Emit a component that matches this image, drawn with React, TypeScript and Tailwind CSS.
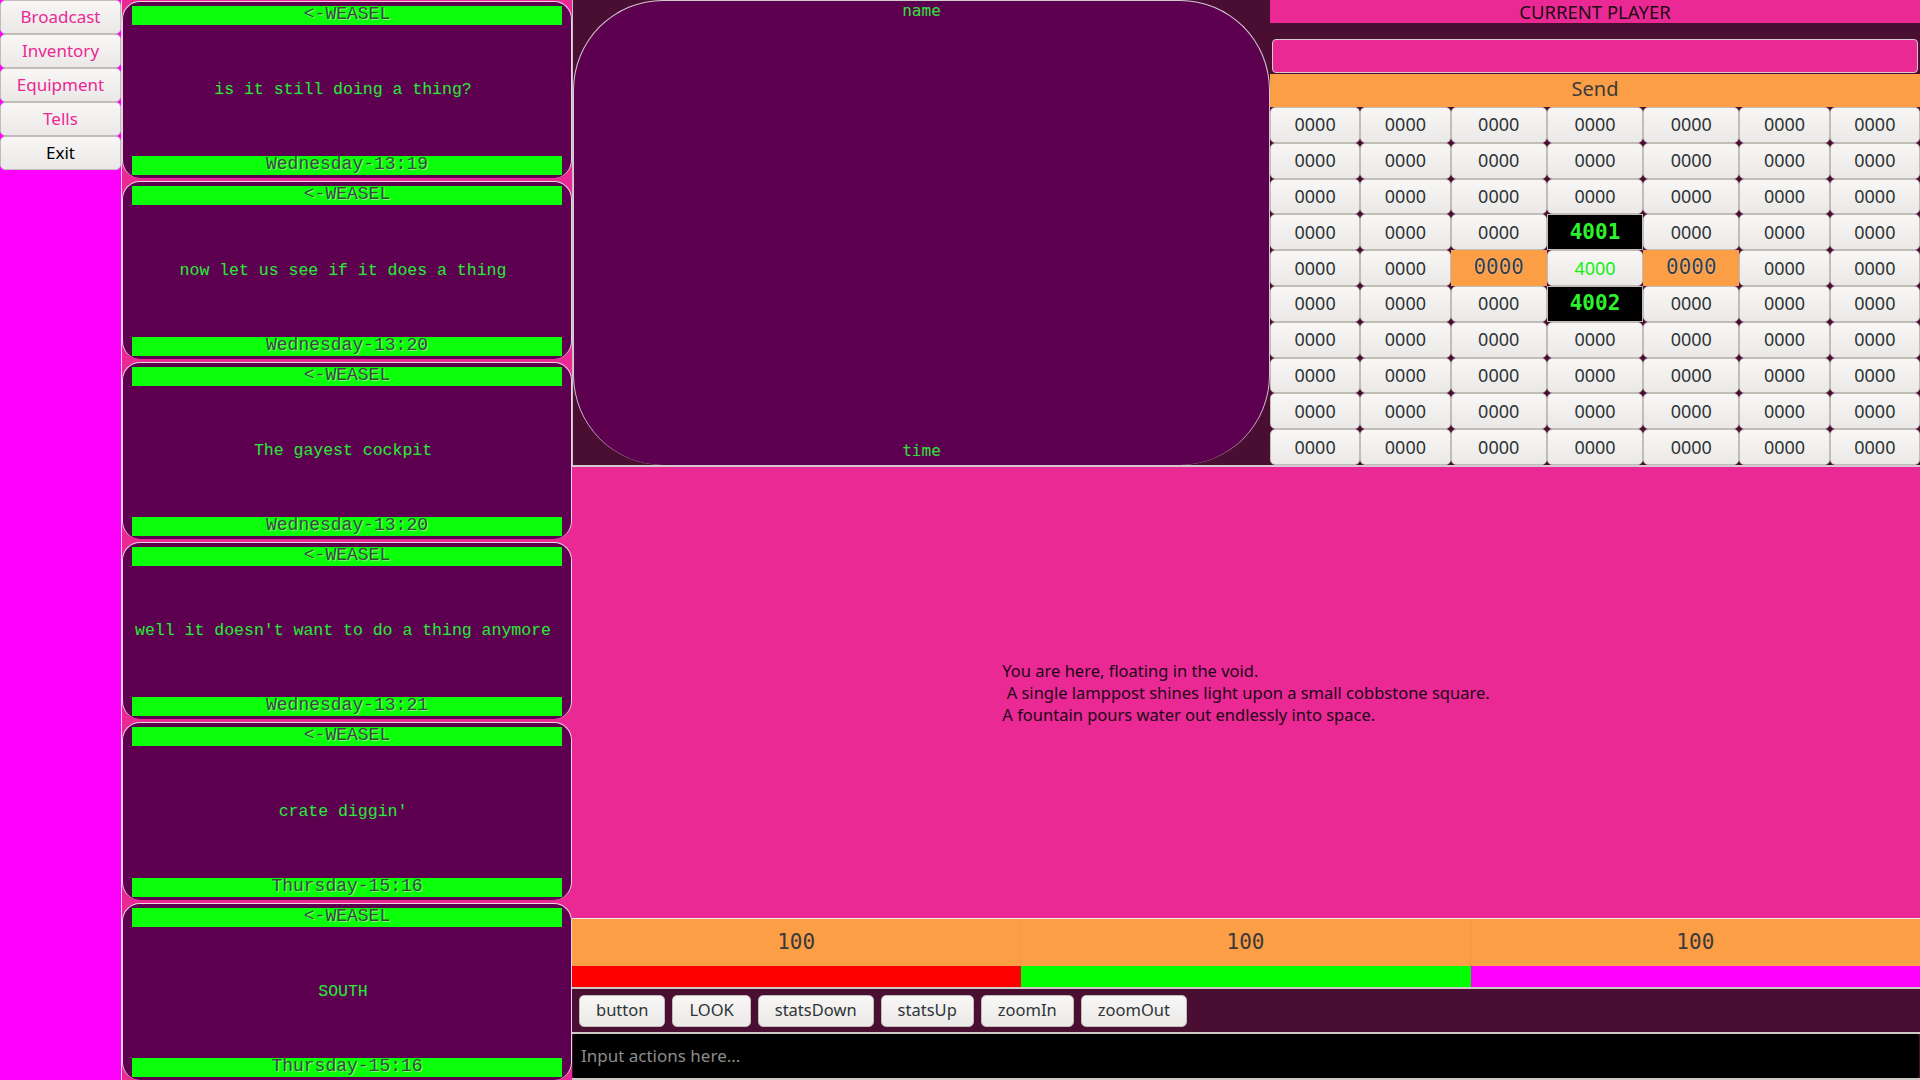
import React from "react";

const messages = [
  { text: "is it still doing a thing?", time: "Wednesday-13:19" },
  { text: "now let us see if it does a thing", time: "Wednesday-13:20" },
  { text: "The gayest cockpit", time: "Wednesday-13:20" },
  { text: "well it doesn't want to do a thing anymore", time: "Wednesday-13:21" },
  { text: "crate diggin'", time: "Thursday-15:16" },
  { text: "SOUTH", time: "Thursday-15:16" },
];

const sideButtons = ["Broadcast", "Inventory", "Equipment", "Tells"];
const actionButtons = ["button", "LOOK", "statsDown", "statsUp", "zoomIn", "zoomOut"];

const gtkButton =
  "bg-linear-to-b from-[#f8f7f6] to-[#ebe9e7] border border-[#c3bdb7] rounded-[5px]";

function MessageCard({ text, time }: { text: string; time: string }) {
  return (
    <div className="flex min-h-0 flex-1 flex-col rounded-[18px] border border-b-0 border-[#e6d6e2] bg-[#5e0050] px-[9px] pb-[3px] pt-[4px]">
      <div className="h-[19px] bg-[#0bff0b] text-center font-['Liberation_Mono',monospace] text-[18px] leading-[17px] text-[#3a4a3a] [text-shadow:1px_1px_0_rgba(255,255,255,0.45)]">
        &lt;-WEASEL
      </div>
      <div className="flex flex-1 items-center justify-center pr-[8px] font-['Liberation_Mono',monospace] text-[16.5px] text-[#2ae83a] [text-shadow:1px_1px_0_rgba(60,60,60,0.35)]">
        {text}
      </div>
      <div className="h-[19px] bg-[#0bff0b] text-center font-['Liberation_Mono',monospace] text-[18px] leading-[17px] text-[#3a4a3a] [text-shadow:1px_1px_0_rgba(255,255,255,0.45)]">
        {time}
      </div>
    </div>
  );
}

function GridCell({ row, col }: { row: number; col: number }) {
  if (col === 3 && (row === 3 || row === 5)) {
    return (
      <div className="flex items-center justify-center border border-[#c3bdb7] bg-black font-['DejaVu_Sans_Mono',monospace] text-[21px] font-bold text-[#2ef22e]">
        {row === 3 ? "4001" : "4002"}
      </div>
    );
  }
  if (row === 4 && (col === 2 || col === 4)) {
    return (
      <div className="flex items-center justify-center border border-[#f7a050] bg-[#fb9e46] font-['DejaVu_Sans_Mono',monospace] text-[21px] text-[#3a3a3a] [text-shadow:0_0_1px_#fff]">
        0000
      </div>
    );
  }
  if (row === 4 && col === 3) {
    return (
      <div className={`${gtkButton} flex items-center justify-center font-['Noto_Sans',sans-serif] text-[18px] text-[#10f010]`}>
        4000
      </div>
    );
  }
  return (
    <div className={`${gtkButton} flex items-center justify-center font-['Noto_Sans',sans-serif] text-[18px] text-[#2e3436]`}>
      0000
    </div>
  );
}

export default function App() {
  return (
    <div className="flex h-[1080px] w-[1920px] overflow-hidden bg-[#4a0e33] font-['Noto_Sans',sans-serif]">
      {/* sidebar */}
      <div className="flex w-[121px] shrink-0 flex-col bg-[#ff00ff]">
        {sideButtons.map((b) => (
          <div key={b} className={`${gtkButton} flex h-[34px] items-center justify-center text-[17px] text-[#ea2994]`}>
            {b}
          </div>
        ))}
        <div className={`${gtkButton} flex h-[34px] items-center justify-center text-[17px] text-black`}>Exit</div>
      </div>

      {/* chat log */}
      <div className="flex w-[451px] shrink-0 flex-col gap-[3px] border-l border-[#e6d6e2] bg-[#ea2994] pt-[1px]">
        {messages.map((m, i) => (
          <MessageCard key={i} text={m.text} time={m.time} />
        ))}
      </div>

      {/* main */}
      <div className="flex min-w-0 flex-1 flex-col">
        <div className="flex h-[465px] shrink-0">
          <div className="w-[698px] shrink-0 border-l border-[#c9c1c6] bg-[#4a0e33]">
            <div className="flex h-full flex-col items-center justify-between rounded-[90px] border border-b-0 border-[#d4cad2] bg-[#5e0050] pb-[4px] font-['DejaVu_Sans_Mono',monospace] text-[16px] leading-[20px] text-[#2fe23a]">
              <span>name</span>
              <span>time</span>
            </div>
          </div>

          <div className="flex min-w-0 flex-1 flex-col bg-[#4a0e33]">
            <div className="flex h-[23px] items-center justify-center bg-[#ea2994] pt-[2px] text-[18.5px] leading-none text-[#1c0a14]">
              CURRENT PLAYER
            </div>
            <div className="h-[16px]" />
            <div className="mx-[2px] h-[34px] rounded-[4px] border border-[#d8c9d2] bg-[#ea2994]" />
            <div className="mt-[1px] flex h-[33px] items-center justify-center bg-[#fb9e46] pb-[3px] text-[20px] text-[#3a3a3a]">Send</div>
            <div className="grid flex-1 grid-cols-[90fr_90fr_96fr_96fr_96fr_90fr_90fr] grid-rows-10">
              {Array.from({ length: 10 }).map((_, r) =>
                Array.from({ length: 7 }).map((_, c) => <GridCell key={`${r}-${c}`} row={r} col={c} />)
              )}
            </div>
          </div>
        </div>

        {/* room description */}
        <div className="flex flex-1 items-center justify-center border-t-2 border-[#d6c8d0] bg-[#ea2994]">
          <div className="text-[16.5px] leading-[22px] whitespace-pre text-[#22061a]">
            <div>You are here, floating in the void.</div>
            <div> A single lamppost shines light upon a small cobbstone square.</div>
            <div>A fountain pours water out endlessly into space.</div>
          </div>
        </div>

        {/* stats */}
        <div className="grid h-[48px] shrink-0 grid-cols-3 border-t border-[#f4eef0] bg-[#fb9e46] font-['DejaVu_Sans_Mono',monospace] text-[21px] text-[#3a3a3a]">
          <div className="flex items-center justify-center border-r border-[#f39640]">100</div>
          <div className="flex items-center justify-center border-r border-[#f39640]">100</div>
          <div className="flex items-center justify-center">100</div>
        </div>
        <div className="grid h-[21px] shrink-0 grid-cols-3">
          <div className="bg-[#ff0000]" />
          <div className="bg-[#00ff00]" />
          <div className="bg-[#ff00ff]" />
        </div>

        {/* actions */}
        <div className="flex h-[47px] shrink-0 items-center gap-[7px] border-y-2 border-[#d0cac6] bg-[#4a0e33] px-[7px]">
          {actionButtons.map((b) => (
            <div key={b} className={`${gtkButton} flex h-[32px] items-center px-[16px] text-[16.5px] text-[#2e3436]`}>
              {b}
            </div>
          ))}
        </div>
        <div className="h-[46px] shrink-0 border-b-2 border-[#d0cac6] bg-[#4a0e33] px-[1px]">
          <div className="flex h-full items-center rounded-[3px] bg-black px-[8px] text-[17px] text-[#8c8c8c]">
            Input actions here...
          </div>
        </div>
      </div>
    </div>
  );
}
